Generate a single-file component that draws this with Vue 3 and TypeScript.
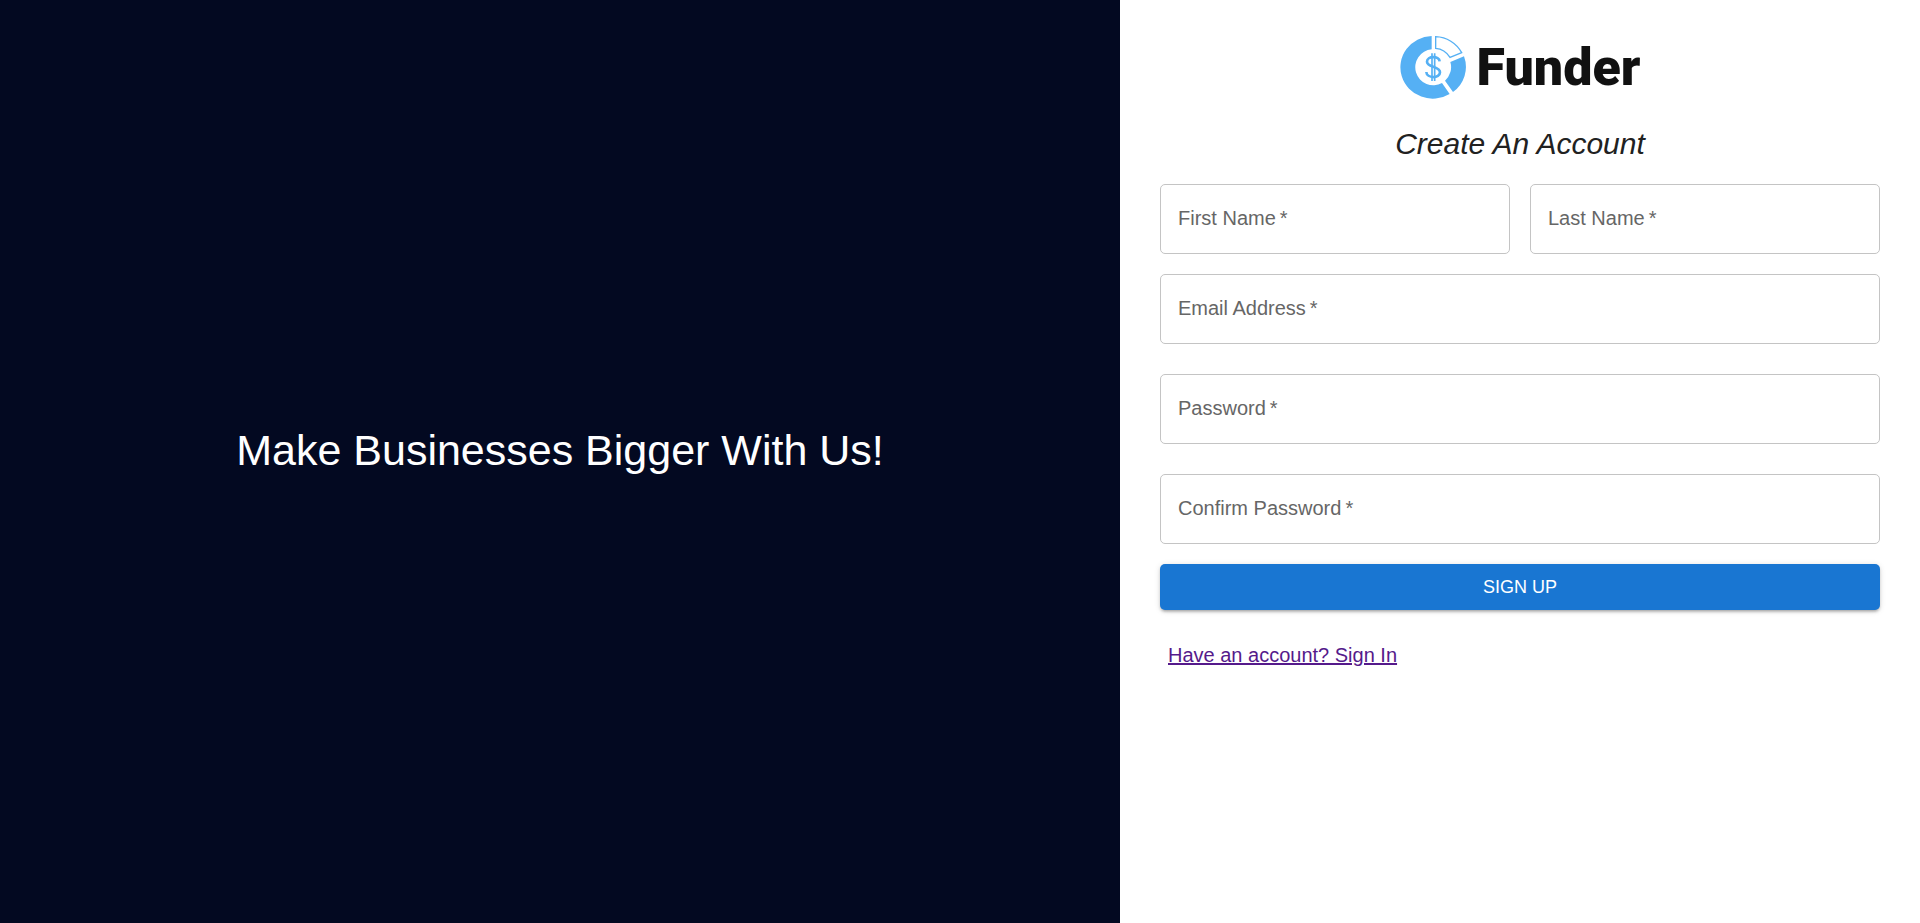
<script setup lang="ts">
import { reactive } from 'vue'

interface Field {
  id: 'firstName' | 'lastName' | 'email' | 'password' | 'confirmPassword'
  label: string
  type: string
  layout: string
}

const fields: Field[] = [
  { id: 'firstName', label: 'First Name', type: 'text', layout: 'half' },
  { id: 'lastName', label: 'Last Name', type: 'text', layout: 'half' },
  { id: 'email', label: 'Email Address', type: 'email', layout: 'full' },
  { id: 'password', label: 'Password', type: 'password', layout: 'full spaced' },
  { id: 'confirmPassword', label: 'Confirm Password', type: 'password', layout: 'full spaced' },
]

const form = reactive<Record<Field['id'], string>>({
  firstName: '',
  lastName: '',
  email: '',
  password: '',
  confirmPassword: '',
})
</script>

<template>
  <div class="page">
    <section class="hero">
      <h1 class="tagline">Make Businesses Bigger With Us!</h1>
    </section>
    <main class="panel">
      <div class="brand">
        <svg class="mark" viewBox="27 15 201 195" aria-hidden="true">
          <g fill="#55b0f4">
            <path d="M122 18 A97 94 0 1 0 176 192 L153 159 A54 54 0 1 1 122 58 Z" />
            <path d="M219 79 A97 94 0 0 1 186 186 L162 152 A54 54 0 0 0 178 96 Z" />
          </g>
          <path d="M134 20 A92 92 0 0 1 212 68 L177 82 Q161 57 134 55 Z" fill="none" stroke="#55b0f4" stroke-width="4" />
          <g fill="none" stroke="#55b0f4">
            <path d="M146 94 C145 77 108 77 108 95 C108 113 147 107 147 127 C147 146 107 146 106 126" stroke-width="8" />
            <path d="M123 70 V153 M131 70 V153" stroke-width="5" />
          </g>
        </svg>
        <span class="name">Funder</span>
      </div>
      <h2 class="title">Create An Account</h2>
      <form class="form" @submit.prevent>
        <div v-for="field in fields" :key="field.id" class="field" :class="field.layout">
          <input :id="field.id" v-model="form[field.id]" :type="field.type" placeholder=" " required />
          <label :for="field.id">{{ field.label }}&thinsp;*</label>
        </div>
        <button class="submit" type="submit">SIGN UP</button>
      </form>
      <a class="signin" href="#">Have an account? Sign In</a>
    </main>
  </div>
</template>

<style>
body {
  margin: 0;
}
</style>

<style scoped>
.page {
  display: grid;
  grid-template-columns: 7fr 5fr;
  min-height: 100vh;
  font-family: "Liberation Sans", Arial, sans-serif;
  background: #fff;
}

.hero {
  display: flex;
  align-items: center;
  justify-content: center;
  padding-bottom: 23px;
  background: #030921;
  color: #fff;
}

.tagline {
  margin: 0;
  font-size: 43px;
  font-weight: 400;
  line-height: 52px;
}

.panel {
  padding: 35px 40px;
}

.brand {
  display: flex;
  align-items: center;
  justify-content: center;
  gap: 10px;
}

.mark {
  width: 67px;
  height: 65px;
}

.name {
  font-family: Roboto, "Liberation Sans", sans-serif;
  font-size: 52px;
  font-weight: 900;
  line-height: 65px;
  color: #111;
}

.title {
  margin: 24px 0 20px;
  font-size: 30px;
  font-style: italic;
  font-weight: 400;
  line-height: 40px;
  text-align: center;
  color: #212121;
}

.form {
  display: grid;
  grid-template-columns: 1fr 1fr;
  gap: 20px;
}

.field {
  position: relative;
}

.full,
.submit {
  grid-column: 1 / -1;
}

.spaced {
  margin-top: 10px;
}

.field input {
  display: block;
  box-sizing: border-box;
  width: 100%;
  height: 70px;
  padding: 0 17px;
  border: 1px solid #c4c4c4;
  border-radius: 5px;
  background: transparent;
  font: inherit;
  font-size: 20px;
  color: #212121;
}

.field input:focus {
  border-color: #1976d2;
  outline: 1px solid #1976d2;
}

.field label {
  position: absolute;
  top: 20px;
  left: 18px;
  font-size: 20px;
  line-height: 28px;
  color: #666;
  pointer-events: none;
}

.field input:not(:placeholder-shown) + label,
.field input:focus + label {
  top: -10px;
  left: 14px;
  padding: 0 4px;
  background: #fff;
  font-size: 15px;
  line-height: 20px;
}

.submit {
  padding: 8px 20px;
  border: 0;
  border-radius: 5px;
  background: #1976d2;
  box-shadow: 0 3px 3px -2px rgba(0, 0, 0, 0.2), 0 2px 3px rgba(0, 0, 0, 0.14), 0 1px 6px rgba(0, 0, 0, 0.12);
  font-family: inherit;
  font-size: 18px;
  line-height: 30px;
  color: #fff;
  cursor: pointer;
}

.signin {
  display: inline-block;
  margin: 30px 8px 0;
  font-size: 20px;
  line-height: 30px;
  color: #551a8b;
}
</style>
